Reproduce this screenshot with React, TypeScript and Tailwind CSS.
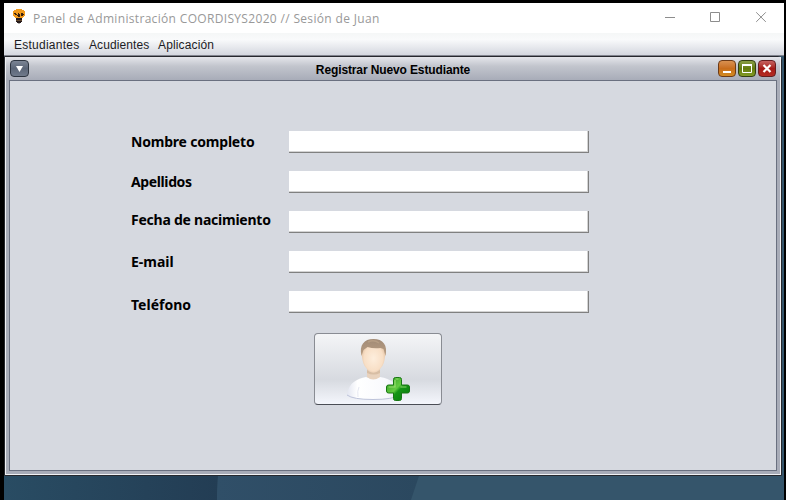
import React from 'react';

const fields = [
  { id: 'nombre', label: 'Nombre completo', cls: 'pt-0 tracking-[-0.2px]' },
  { id: 'apellidos', label: 'Apellidos', cls: 'pt-0 tracking-[-0.38px]' },
  { id: 'fecha', label: 'Fecha de nacimiento', cls: '-mt-[2px] tracking-[-0.24px]' },
  { id: 'email', label: 'E-mail', cls: 'pt-0 tracking-[0px]' },
  { id: 'telefono', label: 'Teléfono', cls: 'pt-[3px] tracking-[0px]' },
];

function BulbIcon() {
  return (
    <svg width="14" height="16" viewBox="0 0 14 16" shapeRendering="crispEdges">
      <path d="M4 0h6v1h2v1h1v5h-1v1h-1v1h-1v1H4V9H3V8H2V7H1V2h1V1h2z" fill="#f19a1c" />
      <path d="M2 4h2v1h1v1h1V4h1v1h1v1h1V4h2v1h1v1h-1v1H9V6H8v2H6V7H5V6H3V5H2z" fill="#3a210f" />
      <path d="M4 9h6v4H9v1H5v-1H4z" fill="#261a1a" />
      <path d="M4 11h6v1H4z" fill="#62482e" />
      <path d="M6 14h2v1H6z" fill="#aaa" />
    </svg>
  );
}

function TitleBar() {
  return (
    <header className="flex h-[30px] shrink-0 items-start bg-white">
      <div className="ml-[8px] mt-[6px] h-4 w-[14px]"><BulbIcon /></div>
      <h1 className="ml-[7px] mt-[7px] whitespace-nowrap font-['Open_Sans','Noto_Sans',sans-serif] text-[12px] leading-[18px] tracking-[0.33px] text-[#999]">
        Panel de Administración COORDISYS2020 // Sesión de Juan
      </h1>
      <svg className="ml-auto mr-[17px] mt-[9px]" width="102" height="11" viewBox="0 0 102 11" fill="none" stroke="#8d8d8d" strokeWidth="1">
        <path d="M0 5.5h10" />
        <path d="M45.5.5h9v9h-9z" />
        <path d="M91.2.3l9.6 9.6M100.8.3l-9.6 9.6" />
      </svg>
    </header>
  );
}

function MenuBar() {
  return (
    <nav className="flex h-[23px] shrink-0 border-b border-[#80838d] bg-linear-to-b from-[#f5f7f7] via-[#f9fafb] via-30% to-[#d4d7df] pl-[10px] font-['Liberation_Sans',Arial,sans-serif] text-[12px] leading-[24px] text-[#1c1c24]">
      <span className="w-[75px] tracking-[0.25px]">Estudiantes</span>
      <span className="w-[69px] tracking-[0.1px]">Acudientes</span>
      <span className="tracking-[0.15px]">Aplicación</span>
    </nav>
  );
}

function FrameButton({ color, children }: { color: string; children: React.ReactNode }) {
  return (
    <button className={`flex h-[17px] w-[18px] items-center justify-center rounded-[4px] border ${color}`}>
      <svg width="16" height="15" viewBox="0 0 16 15" fill="none">{children}</svg>
    </button>
  );
}

function FrameHeader() {
  return (
    <div className="flex h-[23px] shrink-0 items-start bg-linear-to-b from-[#e5e6eb] via-[#c2c5cd] via-40% to-[#a8acb8] px-[4px] pt-[3px]">
      <button className="flex h-[17px] w-[19px] items-center justify-center rounded-[4px] border border-[#2d3440] bg-linear-to-b from-[#7c8595] via-[#5c6678] to-[#707a8b]">
        <svg width="7" height="6" viewBox="0 0 7 6"><path d="M0 0h7L3.5 6z" fill="#fff" /></svg>
      </button>
      <h2 className="flex-1 pl-[39px] text-center font-['Liberation_Sans',Arial,sans-serif] text-[12px] font-bold leading-[20px] tracking-[-0.12px] text-black">
        Registrar Nuevo Estudiante
      </h2>
      <div className="flex gap-[2px]">
        <FrameButton color="border-[#6d3a16] bg-linear-to-b from-[#d99150] via-[#c86d1c] to-[#d38b20]">
          <path d="M4 11h8" stroke="#fff" strokeWidth="2" />
        </FrameButton>
        <FrameButton color="border-[#333f12] bg-linear-to-b from-[#8a9e44] via-[#647c0c] to-[#839b25]">
          <path d="M3 4h10" stroke="#fff" strokeWidth="2" />
          <path d="M3.5 4v7.5h9V4" stroke="#fff" />
        </FrameButton>
        <FrameButton color="border-[#641d20] bg-linear-to-b from-[#c76161] via-[#a51a18] to-[#b52b23]">
          <path d="M4.5 4l7 7M11.5 4l-7 7" stroke="#fff" strokeWidth="2.2" />
        </FrameButton>
      </div>
    </div>
  );
}

function StudentAddIcon() {
  return (
    <svg width="66" height="69" viewBox="0 0 66 69">
      <defs>
        <linearGradient id="shirt">
          <stop offset="0" stopColor="#e3e6f1" /><stop offset=".2" stopColor="#fff" />
          <stop offset=".75" stopColor="#f8f9fd" /><stop offset="1" stopColor="#e3e6f1" />
        </linearGradient>
        <radialGradient id="face" cy=".55" r=".6">
          <stop offset="0" stopColor="#fdeedd" /><stop offset=".65" stopColor="#f8dfc6" /><stop offset="1" stopColor="#d9b594" />
        </radialGradient>
        <linearGradient id="hair" x2="0" y2="1">
          <stop offset="0" stopColor="#a28b76" /><stop offset="1" stopColor="#b99e83" />
        </linearGradient>
        <linearGradient id="plus" x1="0" y1="0" x2="1" y2="1">
          <stop offset="0" stopColor="#2c981e" /><stop offset=".45" stopColor="#64cc42" />
          <stop offset=".55" stopColor="#159416" /><stop offset="1" stopColor="#067b0b" />
        </linearGradient>
      </defs>
      <path d="M2 61C4 48 12 45 21 43Q28 46 35 43C46 45 53 49 55 61Q48 65.5 28 65.5T2 61Z" fill="url(#shirt)" />
      <path d="M2 61Q8 65.5 28 65.5T55 61" fill="none" stroke="#bdc3da" strokeWidth="1" />
      <path d="M13 63q-1-6 1-10" fill="none" stroke="#e6e8f2" />
      <path d="M22 34h13v9Q28 48 22 43Z" fill="#e8d2bd" />
      <path d="M22 36q6 5 13 0v3q-6 3-13 0z" fill="#c8a98c" opacity=".5" />
      <path d="M16.5 20Q16 7 28.5 7T40.5 20l-1 6q-1 7-7 11-4 3-8 0-6-4-7-11z" fill="url(#face)" />
      <path d="M16.5 22C14 11 19 5 28.5 5s14.5 6 12 17l-2-7-3-1q-7 1-13-1l-4 3z" fill="url(#hair)" />
      <path d="M23 8q6-3 11 1" fill="none" stroke="#c8ad90" strokeWidth="1.5" opacity=".5" />
      <g transform="translate(-.5 0)">
        <path d="M51 43.5h4q2 0 2 2V51h6q2 0 2 2v4q0 2-2 2h-6v5.5q0 2-2 2h-4q-2 0-2-2V59h-5q-2 0-2-2v-4q0-2 2-2h5v-5.5q0-2 2-2z" fill="url(#plus)" stroke="#187713" strokeWidth="1" />
        <path d="M51 45h3M44 53h6.5v-7M56 53h6" fill="none" stroke="#a4e67a" strokeWidth="1.2" opacity=".8" />
      </g>
    </svg>
  );
}

function StudentForm() {
  return (
    <form className="flex min-h-0 flex-1 flex-col border border-[#6a7080] bg-[#d6d9e0] pl-[121px] pt-[50px]">
      <div className="flex flex-col gap-[17px]">
        {fields.map(({ id, label, cls }) => (
          <div key={id} className="flex h-[23px]">
            <label htmlFor={id} className={`w-[158px] whitespace-nowrap font-['Noto_Sans','Open_Sans',sans-serif] text-[14px] font-bold leading-[22px] text-black ${cls}`}>{label}</label>
            <input id={id} className="block h-[22px] w-[300px] border-b border-r border-[#808080] bg-white shadow-[inset_-1px_-1px_0_#d4d4d4] outline-none" />
          </div>
        ))}
      </div>
      <button type="button" aria-label="Registrar estudiante" className="ml-[183px] mt-[19px] flex h-[72px] w-[128px] items-start rounded-[4px] border border-[#898c93] border-b-[#4a4d55] bg-linear-to-b from-[#f4f5f7] via-[#d7dae0] via-65% to-[#f4f6fc] pl-[30px]">
        <StudentAddIcon />
      </button>
    </form>
  );
}

export default function App() {
  return (
    <main className="flex h-[500px] w-[786px] flex-col overflow-hidden bg-black pl-[4px] pr-[2px] pt-[3px]">
      <TitleBar />
      <MenuBar />
      <div className="flex min-h-0 flex-1 flex-col bg-[#35556b]">
        <section className="flex h-[420px] w-[778px] shrink-0 flex-col rounded-tr-[4px] border border-[#26282e] bg-[#a8acb8]">
          <div className="flex min-h-0 flex-1 flex-col border-b border-l border-r border-[#f0f1f4]">
            <FrameHeader />
            <div className="flex min-h-0 flex-1 flex-col px-[3px] pb-[3px]"><StudentForm /></div>
          </div>
        </section>
        <svg width="780" height="24" viewBox="0 0 780 24">
          <defs>
            <linearGradient id="left"><stop stopColor="#294c63" /><stop offset="1" stopColor="#233d54" /></linearGradient>
            <linearGradient id="mid"><stop stopColor="#304f68" /><stop offset="1" stopColor="#2b485f" /></linearGradient>
          </defs>
          <path d="M0 0h780v24H0z" fill="#35556b" />
          <path d="M0 0h214l-1 24H0z" fill="url(#left)" />
          <path d="M214 0h201l-8 24H213z" fill="url(#mid)" />
        </svg>
      </div>
    </main>
  );
}
